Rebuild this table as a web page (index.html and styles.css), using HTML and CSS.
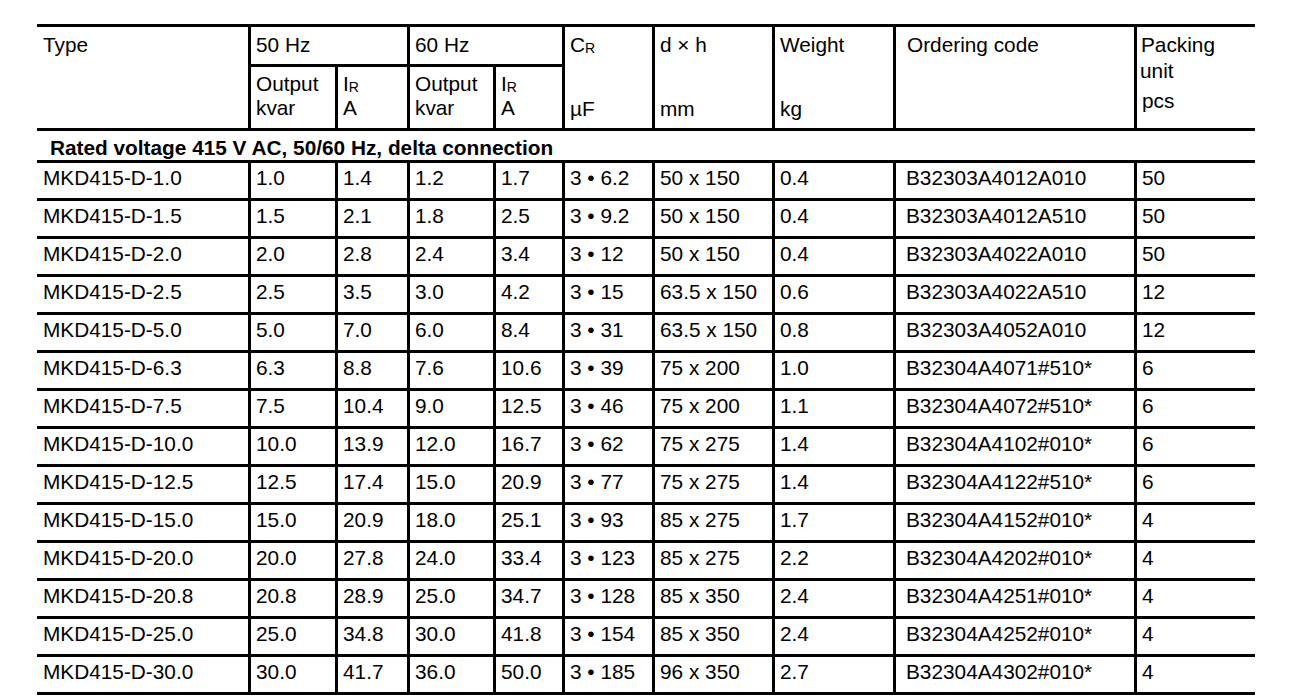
FILE: index.html
```html
<!DOCTYPE html>
<html lang="en">
<head>
<meta charset="utf-8">
<title>MKD415-D capacitors</title>
<link rel="stylesheet" href="styles.css">
</head>
<body>
<div class="sheet">
  <div class="grid" role="table">
    <div class="h span2r first"><div>Type</div></div>
    <div class="h span2c"><div>50 Hz</div></div>
    <div class="h span2c"><div>60 Hz</div></div>
    <div class="h span2r"><div>C<span class="sub">R</span></div><div>µF</div></div>
    <div class="h span2r"><div>d × h</div><div>mm</div></div>
    <div class="h span2r"><div>Weight</div><div>kg</div></div>
    <div class="h span2r code"><div>Ordering code</div></div>
    <div class="h span2r pack"><div class="l1">Packing</div><div class="l2">unit</div><div class="l3">pcs</div></div>

    <div class="sh"><div>Output</div><div>kvar</div></div>
    <div class="sh"><div>I<span class="sub">R</span></div><div>A</div></div>
    <div class="sh"><div>Output</div><div>kvar</div></div>
    <div class="sh"><div>I<span class="sub">R</span></div><div>A</div></div>

    <div class="section">Rated voltage 415 V AC, 50/60 Hz, delta connection</div>

    <div class="c first">MKD415-D-1.0</div><div class="c">1.0</div><div class="c">1.4</div><div class="c">1.2</div><div class="c">1.7</div><div class="c">3 • 6.2</div><div class="c">50 x 150</div><div class="c">0.4</div><div class="c code">B32303A4012A010</div><div class="c">50</div>
    <div class="c first">MKD415-D-1.5</div><div class="c">1.5</div><div class="c">2.1</div><div class="c">1.8</div><div class="c">2.5</div><div class="c">3 • 9.2</div><div class="c">50 x 150</div><div class="c">0.4</div><div class="c code">B32303A4012A510</div><div class="c">50</div>
    <div class="c first">MKD415-D-2.0</div><div class="c">2.0</div><div class="c">2.8</div><div class="c">2.4</div><div class="c">3.4</div><div class="c">3 • 12</div><div class="c">50 x 150</div><div class="c">0.4</div><div class="c code">B32303A4022A010</div><div class="c">50</div>
    <div class="c first">MKD415-D-2.5</div><div class="c">2.5</div><div class="c">3.5</div><div class="c">3.0</div><div class="c">4.2</div><div class="c">3 • 15</div><div class="c">63.5 x 150</div><div class="c">0.6</div><div class="c code">B32303A4022A510</div><div class="c">12</div>
    <div class="c first">MKD415-D-5.0</div><div class="c">5.0</div><div class="c">7.0</div><div class="c">6.0</div><div class="c">8.4</div><div class="c">3 • 31</div><div class="c">63.5 x 150</div><div class="c">0.8</div><div class="c code">B32303A4052A010</div><div class="c">12</div>
    <div class="c first">MKD415-D-6.3</div><div class="c">6.3</div><div class="c">8.8</div><div class="c">7.6</div><div class="c">10.6</div><div class="c">3 • 39</div><div class="c">75 x 200</div><div class="c">1.0</div><div class="c code">B32304A4071#510*</div><div class="c">6</div>
    <div class="c first">MKD415-D-7.5</div><div class="c">7.5</div><div class="c">10.4</div><div class="c">9.0</div><div class="c">12.5</div><div class="c">3 • 46</div><div class="c">75 x 200</div><div class="c">1.1</div><div class="c code">B32304A4072#510*</div><div class="c">6</div>
    <div class="c first">MKD415-D-10.0</div><div class="c">10.0</div><div class="c">13.9</div><div class="c">12.0</div><div class="c">16.7</div><div class="c">3 • 62</div><div class="c">75 x 275</div><div class="c">1.4</div><div class="c code">B32304A4102#010*</div><div class="c">6</div>
    <div class="c first">MKD415-D-12.5</div><div class="c">12.5</div><div class="c">17.4</div><div class="c">15.0</div><div class="c">20.9</div><div class="c">3 • 77</div><div class="c">75 x 275</div><div class="c">1.4</div><div class="c code">B32304A4122#510*</div><div class="c">6</div>
    <div class="c first">MKD415-D-15.0</div><div class="c">15.0</div><div class="c">20.9</div><div class="c">18.0</div><div class="c">25.1</div><div class="c">3 • 93</div><div class="c">85 x 275</div><div class="c">1.7</div><div class="c code">B32304A4152#010*</div><div class="c">4</div>
    <div class="c first">MKD415-D-20.0</div><div class="c">20.0</div><div class="c">27.8</div><div class="c">24.0</div><div class="c">33.4</div><div class="c">3 • 123</div><div class="c">85 x 275</div><div class="c">2.2</div><div class="c code">B32304A4202#010*</div><div class="c">4</div>
    <div class="c first">MKD415-D-20.8</div><div class="c">20.8</div><div class="c">28.9</div><div class="c">25.0</div><div class="c">34.7</div><div class="c">3 • 128</div><div class="c">85 x 350</div><div class="c">2.4</div><div class="c code">B32304A4251#010*</div><div class="c">4</div>
    <div class="c first">MKD415-D-25.0</div><div class="c">25.0</div><div class="c">34.8</div><div class="c">30.0</div><div class="c">41.8</div><div class="c">3 • 154</div><div class="c">85 x 350</div><div class="c">2.4</div><div class="c code">B32304A4252#010*</div><div class="c">4</div>
    <div class="c first">MKD415-D-30.0</div><div class="c">30.0</div><div class="c">41.7</div><div class="c">36.0</div><div class="c">50.0</div><div class="c">3 • 185</div><div class="c">96 x 350</div><div class="c">2.7</div><div class="c code">B32304A4302#010*</div><div class="c">4</div>
  </div>
</div>
</body>
</html>
```

FILE: styles.css
```css
* { box-sizing: border-box; }

html, body {
  margin: 0;
  padding: 0;
  background: #ffffff;
}

body {
  font-family: "Liberation Sans", Arial, sans-serif;
  font-size: 20.8px;
  line-height: 24px;
  color: #000000;
}

.sheet {
  padding: 24px 0 0 37px;
}

.grid {
  display: grid;
  width: 1218px;
  grid-template-columns: 211px 87px 72px 86px 69px 90px 120px 121px 241px 121px;
  grid-template-rows: 37px 64px 32px repeat(14, 38px);
  border-top: 3px solid #000;
  border-bottom: 3px solid #000;
  box-sizing: content-box;
}

.grid > div {
  border-left: 3px solid #000;
  white-space: nowrap;
}

.grid > .first {
  border-left: none;
  padding-left: 6px;
}

/* header cells of the first header row */
.h {
  padding: 6px 0 7px 5px;
}

.span2r {
  grid-row: span 2;
  display: flex;
  flex-direction: column;
  justify-content: space-between;
}

.span2c {
  grid-column: span 2;
}

.h.code {
  padding-left: 11px;
}

.h.pack {
  justify-content: flex-start;
  padding-left: 4px;
}

.pack .l2 {
  margin-top: 2px;
  margin-left: -1px;
}

.pack .l3 {
  margin-top: 6px;
  margin-left: 1px;
}

/* second header row */
.sh {
  border-top: 3px solid #000;
  padding: 5px 0 0 5px;
}

.sub {
  font-size: 14px;
  line-height: 1;
  vertical-align: -1px;
}

/* section title row */
.grid > .section {
  grid-column: 1 / -1;
  border-left: none;
  border-top: 3px solid #000;
  padding: 5px 0 0 13px;
  font-weight: bold;
}

/* data cells */
.c {
  border-top: 3px solid #000;
  padding: 3px 0 0 5px;
}

.c.code {
  padding-left: 10px;
}
```
